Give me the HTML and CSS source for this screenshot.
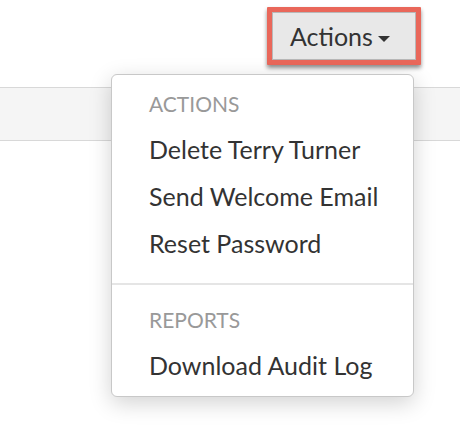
FILE: index.html
```html
<!DOCTYPE html>
<html>
<head>
<meta charset="utf-8">
<link rel="stylesheet" href="styles.css">
</head>
<body>
<div class="toolbar">
  <div class="dropdown">
    <button class="btn">Actions<span class="caret"></span></button>
    <div class="menu">
      <div class="menu-header">ACTIONS</div>
      <div class="menu-item">Delete Terry Turner</div>
      <div class="menu-item">Send Welcome Email</div>
      <div class="menu-item">Reset Password</div>
      <div class="divider"></div>
      <div class="menu-header">REPORTS</div>
      <div class="menu-item">Download Audit Log</div>
    </div>
  </div>
</div>
<div class="bar"></div>
</body>
</html>
```
FILE: styles.css
```css
html, body {
  margin: 0;
  padding: 0;
  background: #fff;
  font-family: Lato, "Open Sans", sans-serif;
}
body {
  min-height: 440px;
}
.toolbar {
  display: flex;
  justify-content: flex-end;
  padding: 7px 39px 0 0;
}
.dropdown {
  position: relative;
}
.btn {
  box-sizing: border-box;
  width: 154px;
  height: 58px;
  display: flex;
  align-items: center;
  padding: 0 0 0 18px;
  background: #e8e8e8;
  border: 5px solid #e9675a;
  border-radius: 1px;
  box-shadow: inset 0 0 0 1px #b8b8b8, 0 3px 4px rgba(0, 0, 0, 0.45);
  font-family: Lato, sans-serif;
  font-size: 25px;
  color: #333;
  cursor: pointer;
}
.caret {
  display: inline-block;
  width: 0;
  height: 0;
  margin-left: 5px;
  margin-top: 5px;
  border-top: 6px solid #333;
  border-left: 6px solid transparent;
  border-right: 6px solid transparent;
}
.menu {
  position: absolute;
  top: 67px;
  right: 7px;
  width: 303px;
  box-sizing: border-box;
  background: #fff;
  border: 1px solid #c8c8c8;
  border-radius: 6px;
  box-shadow: 0 6px 22px rgba(0, 0, 0, 0.18);
  padding: 7px 0 7px;
  z-index: 2;
}
.menu-header {
  padding-left: 37px;
  font-size: 21px;
  line-height: 44px;
  color: #999;
}
.menu-item {
  padding-left: 37px;
  font-size: 25px;
  line-height: 47px;
  color: #333;
  white-space: nowrap;
}
.divider {
  height: 2px;
  background: #e5e5e5;
  margin: 16px 0 13px;
}
.bar {
  margin-top: 22px;
  height: 52px;
  background: #f5f5f5;
  border-top: 1px solid #d8d8d8;
  border-bottom: 1px solid #d8d8d8;
}
```
